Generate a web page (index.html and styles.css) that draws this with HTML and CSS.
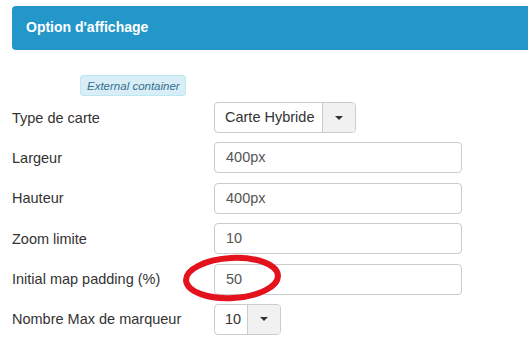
FILE: index.html
```html
<!DOCTYPE html>
<html>
<head>
<meta charset="utf-8">
<link rel="stylesheet" href="styles.css">
</head>
<body>
<div class="page">
  <div class="panel-heading">Option d'affichage</div>
  <div class="badge-row"><span class="badge">External container</span></div>
  <form class="form">
    <div class="row">
      <label class="label">Type de carte</label>
      <div class="select select-wide"><span class="select-text">Carte Hybride</span><span class="select-btn"><span class="caret"></span></span></div>
    </div>
    <div class="row">
      <label class="label">Largeur</label>
      <div class="input">400px</div>
    </div>
    <div class="row">
      <label class="label">Hauteur</label>
      <div class="input">400px</div>
    </div>
    <div class="row">
      <label class="label">Zoom limite</label>
      <div class="input">10</div>
    </div>
    <div class="row">
      <label class="label">Initial map padding (%)</label>
      <div class="input">50</div>
      <svg class="circle" width="104" height="50" viewBox="0 0 104 50"><ellipse cx="51" cy="24" rx="46" ry="20" fill="none" stroke="#e3121c" stroke-width="6" transform="rotate(-3 51 24)"/></svg>
    </div>
    <div class="row">
      <label class="label">Nombre Max de marqueur</label>
      <div class="select select-small"><span class="select-text">10</span><span class="select-btn"><span class="caret"></span></span></div>
    </div>
  </form>
</div>
</body>
</html>
```
FILE: styles.css
```css
html, body {
  margin: 0;
  padding: 0;
  background: #ffffff;
  overflow: hidden;
}
.page {
  width: 528px;
  height: 352px;
  font-family: "Liberation Sans", Arial, sans-serif;
  font-size: 14.5px;
  color: #333333;
  padding-top: 6px;
  box-sizing: border-box;
}
.panel-heading {
  margin-left: 12px;
  margin-right: -6px;
  height: 44px;
  background: #2397c9;
  border-radius: 4px;
  color: #ffffff;
  font-weight: bold;
  font-size: 14px;
  line-height: 42px;
  padding-left: 14px;
}
.badge-row {
  margin-top: 25px;
  padding-left: 80px;
  height: 21px;
}
.badge {
  display: inline-block;
  height: 21px;
  box-sizing: border-box;
  padding: 0 5px 0 6px;
  line-height: 20px;
  font-size: 11.5px;
  font-style: italic;
  color: #31708f;
  background: #d9edf7;
  border: 1px solid #bce8f1;
  border-radius: 3px;
}
.form {
  margin-top: 6px;
  display: flex;
  flex-direction: column;
  gap: 9.4px;
}
.row {
  position: relative;
  display: flex;
  align-items: center;
  height: 31px;
  padding-left: 12px;
}
.label {
  width: 202px;
  flex: none;
}
.input {
  width: 248px;
  height: 31px;
  box-sizing: border-box;
  border: 1px solid #cccccc;
  border-radius: 4px;
  padding: 0 11px;
  line-height: 29px;
  color: #555555;
}
.select {
  display: flex;
  height: 31px;
  box-sizing: border-box;
  border: 1px solid #cccccc;
  border-radius: 4px;
  overflow: hidden;
}
.select-wide { width: 142px; }
.select-small { width: 67px; }
.select-text {
  flex: 1;
  padding-left: 10px;
  line-height: 29px;
  color: #333333;
}
.select-btn {
  width: 32px;
  flex: none;
  background: #f1f1f1;
  border-left: 1px solid #cccccc;
  display: flex;
  align-items: center;
  justify-content: center;
}
.caret {
  width: 0;
  height: 0;
  border-left: 4px solid transparent;
  border-right: 4px solid transparent;
  border-top: 4px solid #333333;
}
.circle {
  position: absolute;
  left: 181px;
  top: -10px;
}
```
